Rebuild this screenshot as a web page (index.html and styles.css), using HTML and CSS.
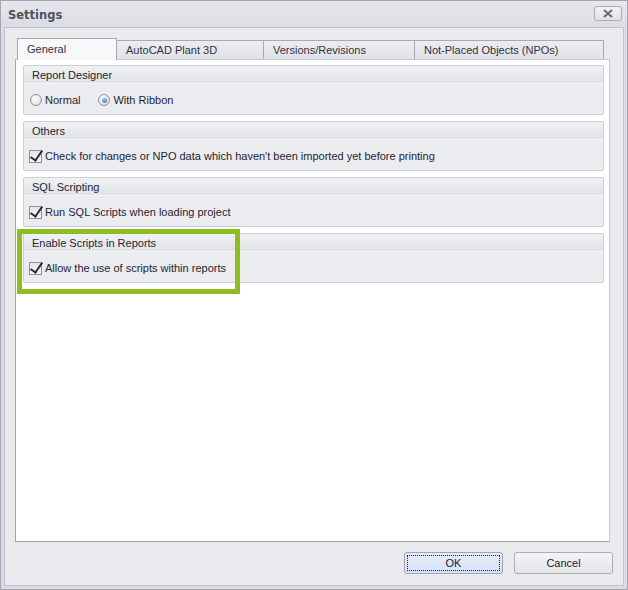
FILE: index.html
```html
<!DOCTYPE html>
<html lang="en">
<head>
    <meta charset="UTF-8">
    <link rel="stylesheet" href="styles.css">
    <title>Settings</title>
</head>
<body>
    <div class="window">
        <div class="title-bar">
            <span class="title">Settings</span>
            <button class="close-btn" aria-label="Close">
                <svg width="12" height="9" viewBox="0 0 12 9"><path d="M2 1 L10 8 M10 1 L2 8" stroke="#6b6e78" stroke-width="2.2" fill="none"/></svg>
            </button>
        </div>
        <div class="client">
            <div class="tabs">
                <div class="tab active">General</div>
                <div class="tab tab-plant">AutoCAD Plant 3D</div>
                <div class="tab tab-versions">Versions/Revisions</div>
                <div class="tab tab-npo">Not-Placed Objects (NPOs)</div>
            </div>
            <div class="tab-page">
                <div class="group">
                    <div class="group-header">Report Designer</div>
                    <div class="group-body">
                        <label class="option"><span class="radio"></span>Normal</label>
                        <label class="option"><span class="radio checked"></span>With Ribbon</label>
                    </div>
                </div>
                <div class="group">
                    <div class="group-header">Others</div>
                    <div class="group-body">
                        <label class="option"><span class="checkbox checked"></span>Check for changes or NPO data which haven't been imported yet before printing</label>
                    </div>
                </div>
                <div class="group">
                    <div class="group-header">SQL Scripting</div>
                    <div class="group-body">
                        <label class="option"><span class="checkbox checked"></span>Run SQL Scripts when loading project</label>
                    </div>
                </div>
                <div class="group">
                    <div class="group-header">Enable Scripts in Reports</div>
                    <div class="group-body">
                        <label class="option"><span class="checkbox checked"></span>Allow the use of scripts within reports</label>
                    </div>
                </div>
                <div class="highlight"></div>
            </div>
            <div class="buttons">
                <button class="btn btn-ok"><span>OK</span></button>
                <button class="btn">Cancel</button>
            </div>
        </div>
    </div>
</body>
</html>
```

FILE: styles.css
```css
body {
    margin: 0;
    background: #fff;
    font-family: "Liberation Sans", Arial, sans-serif;
    font-size: 11px;
    color: #1f2433;
}

.window {
    width: 628px;
    height: 590px;
    box-sizing: border-box;
    background: #dcdde4;
    border: 1px solid #a4a6b1;
    display: flex;
    flex-direction: column;
}

.title-bar {
    height: 26px;
    display: flex;
    align-items: center;
    justify-content: space-between;
    padding: 0 5px 0 7px;
    background: linear-gradient(#e6e7ec, #dcdde4);
}

.title {
    font-family: Tahoma, "DejaVu Sans", sans-serif;
    font-weight: bold;
    font-size: 11.5px;
    color: #4e525c;
    margin-top: 1px;
}

.close-btn {
    width: 28px;
    height: 15px;
    margin-top: -1px;
    padding: 0;
    border: 1px solid #a9abb5;
    border-radius: 3px;
    background: linear-gradient(#f2f2f5, #dfe0e6);
    display: flex;
    align-items: center;
    justify-content: center;
}

.client {
    flex: 1;
    margin: 0 3px 3px 3px;
    background: #e9eaee;
    border: 1px solid #bfc0c8;
    padding: 10px 13px 0 10px;
    display: flex;
    flex-direction: column;
}

.tabs {
    display: flex;
    height: 21px;
    margin-left: 2px;
    align-items: flex-end;
}

.tab {
    height: 19px;
    box-sizing: border-box;
    border: 1px solid #a8aab3;
    border-bottom: none;
    border-left: none;
    background: linear-gradient(#ecedf1, #e1e2e8);
    padding: 3px 0 0 9px;
    color: #30333c;
}

.tab.active {
    height: 22px;
    width: 100px;
    border-left: 1px solid #a8aab3;
    background: #f8f8fa;
    padding-left: 9px;
    padding-top: 4px;
    position: relative;
    z-index: 1;
    margin-bottom: -1px;
}

.tab-plant { width: 147px; }
.tab-versions { width: 151px; }
.tab-npo { width: 189px; }

.tab-page {
    position: relative;
    width: 595px;
    height: 483px;
    box-sizing: border-box;
    background: #fff;
    border: 1px solid #a3a5ae;
    border-top-color: #c9cad1;
    border-right-color: #c9cad1;
    padding: 5px 5px 0 7px;
    display: flex;
    flex-direction: column;
    gap: 6px;
}

.group {
    height: 50px;
    box-sizing: border-box;
    border: 1px solid #cdced6;
    border-radius: 2px;
    background: #ebecf0;
}

.group-header {
    height: 18px;
    box-sizing: border-box;
    padding: 3px 0 0 8px;
    background: linear-gradient(#f0f1f4, #e2e3e8);
    border-bottom: 1px solid #f6f6f8;
    color: #23262e;
}

.group-body {
    display: flex;
    align-items: center;
    gap: 18px;
    height: 30px;
    padding-left: 6px;
    padding-top: 1px;
}

.option {
    display: flex;
    align-items: center;
    gap: 3px;
}

.radio {
    width: 10px;
    height: 10px;
    border-radius: 50%;
    border: 1px solid #8f939c;
    background: radial-gradient(circle at 40% 35%, #fdfdfd, #d8d9de);
    display: flex;
    align-items: center;
    justify-content: center;
}

.radio.checked::after {
    content: "";
    width: 5px;
    height: 5px;
    border-radius: 50%;
    background: radial-gradient(circle at 40% 35%, #9cc3f3, #2f6fc7);
}

.checkbox {
    width: 11px;
    height: 11px;
    border: 1px solid #8d9099;
    background: linear-gradient(#e4e5e9, #f7f7f9);
    position: relative;
    margin-left: -1px;
}

.checkbox.checked::after {
    content: "";
    position: absolute;
    left: 3px;
    top: -3px;
    width: 5px;
    height: 11px;
    border: solid #2b2d33;
    border-width: 0 2px 2px 0;
    transform: rotate(35deg);
}

.highlight {
    position: absolute;
    left: 1px;
    top: 169px;
    width: 223px;
    height: 65px;
    box-sizing: border-box;
    border: 5px solid #8dbd1e;
}

.buttons {
    display: flex;
    justify-content: flex-end;
    gap: 11px;
    margin-top: 10px;
    margin-right: -3px;
}

.btn {
    width: 99px;
    height: 22px;
    font-family: inherit;
    font-size: 11px;
    color: #20232b;
    border: 1px solid #acaeb6;
    border-radius: 3px;
    background: linear-gradient(#f4f4f6, #e3e4e9);
    padding: 0;
}

.btn-ok {
    background: linear-gradient(#e6ecfb, #d6dff7);
    border-color: #9fa3b0;
    padding: 2px;
}

.btn-ok span {
    display: block;
    height: 100%;
    box-sizing: border-box;
    border: 1px dotted #222;
    line-height: 14px;
}
```
